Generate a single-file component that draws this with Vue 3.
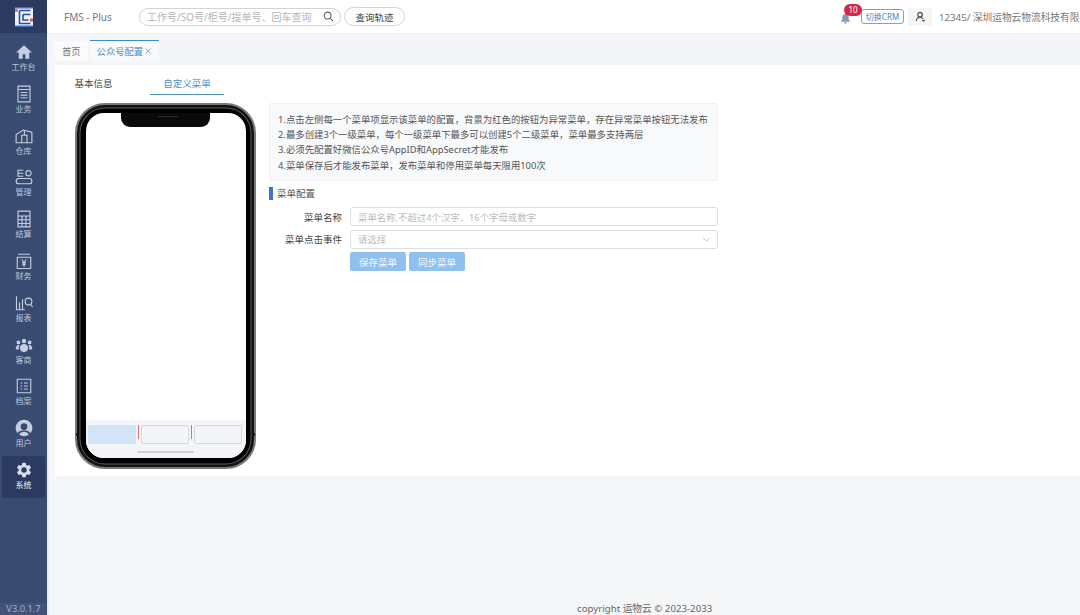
<template>
  <div class="layout">
    <aside class="sidebar">
      <div class="logo">
        <svg width="20" height="20" viewBox="0 0 20 20">
          <rect x="1" y="1" width="18" height="18" fill="#eef2f9" />
          <path d="M1 .8h18M1 19.2h18" stroke="#3c6cc0" stroke-width="1.4" />
          <path d="M5.5 3.5h11M5.5 3.5v13h11M9 7.5h7.5M9 7.5V13h5.5" fill="none" stroke="#2b4f9a" stroke-width="1.6" />
          <rect x="1" y="2" width="3" height="3" fill="#e8795f" />
          <rect x="16" y="11.5" width="3" height="3" fill="#e2574c" />
        </svg>
      </div>
      <nav class="nav">
        <a v-for="item in menu" :key="item.label" class="nav-item" :class="{ active: item.active }">
          <svg class="nav-icon" viewBox="0 0 24 24">
            <path v-if="item.fill" :d="item.fill" fill="currentColor" fill-rule="evenodd" />
            <path v-if="item.stroke" :d="item.stroke" fill="none" stroke="currentColor" stroke-width="1.5" />
          </svg>
          <span>{{ item.label }}</span>
        </a>
      </nav>
      <div class="version">V3.0.1.7</div>
    </aside>

    <div class="main">
      <header class="header">
        <span class="brand">FMS - Plus</span>
        <i class="divider"></i>
        <div class="search">
          <span class="search-text">工作号/SO号/柜号/提单号、回车查询</span>
          <svg width="11" height="11" viewBox="0 0 24 24" fill="none" stroke="#666" stroke-width="2.4">
            <circle cx="10" cy="10" r="7.5" />
            <path d="M16 16l6 6" />
          </svg>
        </div>
        <button class="track-btn">查询轨迹</button>
        <div class="header-right">
          <div class="bell">
            <svg class="bell-icon" width="11" height="12" viewBox="0 0 24 24" fill="#8a97ab">
              <path d="M12 1a2 2 0 0 0-2 2v.6C6.6 4.5 5 7.4 5 11v5l-3 3v1h20v-1l-3-3v-5c0-3.6-1.6-6.5-5-7.4V3a2 2 0 0 0-2-2zM9 21.5a3 3 0 0 0 6 0z" />
            </svg>
            <span class="badge">10</span>
          </div>
          <span class="crm">切换CRM</span>
          <span class="user-box">
            <svg width="11" height="11" viewBox="0 0 24 24" fill="none" stroke="#555" stroke-width="2.6">
              <circle cx="11" cy="8" r="5" />
              <path d="M3 22c0-5 3-8 8-8 3 0 5 1 7 3M16 20l2 2 3-3" />
            </svg>
          </span>
          <span class="company">12345/ 深圳运物云物流科技有限公司</span>
        </div>
      </header>

      <div class="tabs">
        <span class="tab">首页</span>
        <span class="tab current">公众号配置
          <svg width="8" height="8" viewBox="0 0 10 10" stroke="#777" stroke-width="1">
            <path d="M1 1l8 8M9 1l-8 8" />
          </svg>
        </span>
      </div>

      <section class="content">
        <div class="sub-tabs">
          <span class="sub-tab">基本信息</span>
          <span class="sub-tab selected">自定义菜单</span>
        </div>

        <div class="panel">
          <div class="phone">
            <div class="notch"><i class="speaker"></i></div>
            <i class="side-btn left"></i>
            <i class="side-btn right"></i>
            <div class="screen">
              <div class="screen-body"></div>
              <div class="menu-bar">
                <template v-for="(slot, i) in 3" :key="slot">
                  <i v-if="i > 0" class="menu-line"></i>
                  <span class="menu-slot" :class="{ on: i === 0 }"></span>
                </template>
              </div>
              <i class="home-line"></i>
            </div>
          </div>

          <div class="config">
            <div class="tips">
              <p v-for="line in tips" :key="line">{{ line }}</p>
            </div>
            <h3 class="section-title">菜单配置</h3>
            <div class="form-row">
              <label>菜单名称</label>
              <div class="field">菜单名称,不超过4个汉字、16个字母或数字</div>
            </div>
            <div class="form-row">
              <label>菜单点击事件</label>
              <div class="field select">
                <span>请选择</span>
                <svg width="9" height="5" viewBox="0 0 10 6" fill="none" stroke="#b5b5b5">
                  <path d="M1 1l4 4 4-4" />
                </svg>
              </div>
            </div>
            <div class="actions">
              <button class="primary">保存菜单</button>
              <button class="primary">同步菜单</button>
            </div>
          </div>
        </div>
      </section>

      <footer class="footer">copyright 运物云 © 2023-2033</footer>
    </div>
  </div>
</template>

<script setup>
const gear = 'M19.14 12.94c.04-.3.06-.61.06-.94 0-.32-.02-.64-.07-.94l2.03-1.58a.49.49 0 0 0 .12-.61l-1.92-3.32a.49.49 0 0 0-.59-.22l-2.39.96c-.5-.38-1.03-.7-1.62-.94l-.36-2.54a.48.48 0 0 0-.48-.41h-3.84a.48.48 0 0 0-.47.41l-.36 2.54c-.59.24-1.13.57-1.62.94l-2.39-.96a.49.49 0 0 0-.59.22L2.74 8.87a.48.48 0 0 0 .12.61l2.03 1.58c-.05.3-.09.63-.09.94s.02.64.07.94l-2.03 1.58a.49.49 0 0 0-.12.61l1.92 3.32c.12.22.37.29.59.22l2.39-.96c.5.38 1.03.7 1.62.94l.36 2.54c.05.24.24.41.48.41h3.84c.24 0 .44-.17.47-.41l.36-2.54c.59-.24 1.13-.56 1.62-.94l2.39.96c.22.08.47 0 .59-.22l1.92-3.32a.48.48 0 0 0-.12-.61l-2.01-1.58zM12 15.6A3.6 3.6 0 1 1 12 8.4a3.6 3.6 0 0 1 0 7.2z'

const menu = [
  { label: '工作台', fill: 'M12 3 1.5 12.5H5V21h5.2v-6h3.6v6H19v-8.5h3.5z' },
  { label: '业务', stroke: 'M4 1.5h16v21H4zM4 6h16M7.5 10h9M7.5 13.5h9M7.5 17h9' },
  { label: '仓库', stroke: 'M1.5 21V10L11 4l11.5 3v14zM9 21V11h7v10M12.5 4v7' },
  { label: '管理', stroke: 'M11 3H4v4h7M4 7v4h7M18 7m-3.5 0a3.5 3.5 0 1 0 7 0a3.5 3.5 0 1 0-7 0M5 14h14a3.5 3.5 0 0 1 0 7H5a3.5 3.5 0 0 1 0-7z' },
  { label: '结算', stroke: 'M4 1.5h16v21H4zM4 8h16M4 13h16M4 18h16M9.3 8v14.5M14.6 8v14.5' },
  { label: '财务', stroke: 'M3 7h18v15H3zM4 3h16M9 10l3 4 3-4M12 14v5.5M9.5 14.5h5M9.5 17h5' },
  { label: '报表', stroke: 'M2 3v18h11M6 11v10M10 7v14M18 10m-4.5 0a4.5 4.5 0 1 0 9 0a4.5 4.5 0 1 0-9 0M21 14l2.5 3.5' },
  { label: '客商', fill: 'M12 3.5a3 3 0 1 0 0 6 3 3 0 0 0 0-6zM4.5 6a2.5 2.5 0 1 0 0 5 2.5 2.5 0 0 0 0-5zM19.5 6a2.5 2.5 0 1 0 0 5 2.5 2.5 0 0 0 0-5zM12 10.5c-3.5 0-5.5 2.5-5.5 5.5s2.5 5.5 5.5 5.5 5.5-2.5 5.5-5.5-2-5.5-5.500-5.500zM1 17c0-2.5 1.5-5 3.5-5 .6 0 1.1.1 1.5.3-.6 1-1 2.3-1 3.7 0 .8.1 1.5.3 2.2C3.500 18.200 1 18 1 17zM23 17c0-2.5-1.5-5-3.500-5-.6 0-1.100.1-1.500.3.6 1 1 2.300 1 3.700 0 .8-.1 1.500-.3 2.200 1.800 0 4.300-.2 4.300-1.200z' },
  { label: '档案', stroke: 'M3 3h18v18H3zM7.5 8h2M7.5 12h2M7.5 16h2M12 8h5M12 12h5M12 16h5' },
  { label: '用户', fill: 'M12 1a11 11 0 0 0-8.5 18c1.5-3 4.5-4 8.5-4s7 1 8.5 4A11 11 0 0 0 12 1zM12 5.5a4.5 4.5 0 1 1 0 9 4.5 4.5 0 0 1 0-9zM5.5 20.5c1.5-2.2 3.800-3.500 6.500-3.500s5 1.300 6.500 3.500a11 11 0 0 1-13 0z' },
  { label: '系统', fill: gear, active: true }
]

const tips = [
  '1.点击左侧每一个菜单项显示该菜单的配置，背景为红色的按钮为异常菜单，存在异常菜单按钮无法发布',
  '2.最多创建3个一级菜单，每个一级菜单下最多可以创建5个二级菜单，菜单最多支持两层',
  '3.必须先配置好微信公众号AppID和AppSecret才能发布',
  '4.菜单保存后才能发布菜单，发布菜单和停用菜单每天限用100次'
]
</script>

<style>
html,
body {
  margin: 0;
  overflow: hidden;
}
</style>

<style scoped>
.layout {
  display: flex;
  width: 1080px;
  height: 615px;
  overflow: hidden;
  font-family: "Noto Sans", "Noto Sans CJK SC", sans-serif;
  color: #555;
  background: #f4f6f8;
}

.sidebar {
  width: 47px;
  flex: none;
  display: flex;
  flex-direction: column;
  background: #3a4b72;
  box-shadow: 1px 0 2px rgba(80, 110, 190, 0.15);
}

.logo {
  height: 33px;
  display: flex;
  align-items: center;
  justify-content: center;
  background: #2c3a5f;
}

.nav {
  flex: 1;
  padding-top: 5px;
}

.nav-item {
  box-sizing: border-box;
  height: 41.8px;
  margin: 0 2px;
  padding-top: 5px;
  border-radius: 3px;
  display: flex;
  flex-direction: column;
  align-items: center;
  font-size: 8px;
  line-height: 10px;
  color: #bfc9dd;
}

.nav-icon {
  width: 18px;
  height: 18px;
  margin-bottom: 1px;
  color: #c5cfe2;
}

.nav-item.active {
  background: #2b3a5e;
  color: #f0f3f8;
}

.nav-item.active .nav-icon {
  color: #d5deef;
}

.version {
  height: 12px;
  line-height: 12px;
  text-align: center;
  font-size: 9.3px;
  color: #a0adc5;
  background: #42527a;
}

.main {
  flex: 1;
  min-width: 0;
  display: flex;
  flex-direction: column;
}

.header {
  height: 34px;
  flex: none;
  display: flex;
  align-items: center;
  padding-left: 17px;
  background: #fff;
  border-bottom: 1px solid #eef0f3;
  box-sizing: border-box;
}

.brand {
  width: 48px;
  flex: none;
  font-size: 10px;
  white-space: nowrap;
  color: #777;
}

.divider {
  width: 1px;
  height: 15px;
  margin: 0 12px 0 14px;
  background: #e4e4e4;
}

.search {
  box-sizing: border-box;
  width: 202px;
  height: 18px;
  margin-left: 1px;
  flex: none;
  display: flex;
  align-items: center;
  justify-content: space-between;
  padding: 0 6px 0 7px;
  border: 1px solid #d3d3d3;
  border-radius: 9px;
}

.search-text {
  font-size: 10px;
  white-space: nowrap;
  color: #b5b5b5;
}

.track-btn {
  box-sizing: border-box;
  width: 61px;
  height: 19px;
  margin-left: 3px;
  flex: none;
  padding: 0;
  font-family: inherit;
  font-size: 9.5px;
  color: #444;
  background: #fff;
  border: 1px solid #d3d3d3;
  border-radius: 10px;
}

.header-right {
  display: flex;
  flex: none;
  align-items: center;
  margin-left: 435px;
}

.bell {
  position: relative;
  width: 21px;
  height: 12px;
  margin-top: 3px;
}

.bell-icon {
  display: block;
}

.badge {
  position: absolute;
  left: 4px;
  top: -8px;
  width: 18px;
  height: 12px;
  border-radius: 6px;
  background: #d3274a;
  color: #fff;
  font-size: 8px;
  line-height: 12px;
  text-align: center;
}

.crm {
  box-sizing: border-box;
  width: 43px;
  height: 15px;
  line-height: 13px;
  text-align: center;
  font-size: 8px;
  white-space: nowrap;
  color: #3d8bc9;
  border: 1px solid #6fa8d6;
  border-radius: 3px;
}

.user-box {
  width: 24px;
  height: 18px;
  margin-left: 4px;
  display: flex;
  align-items: center;
  justify-content: center;
  background: #f6f6f6;
}

.company {
  margin-left: 7px;
  font-size: 9.7px;
  white-space: nowrap;
  color: #777;
}

.tabs {
  height: 31px;
  flex: none;
  display: flex;
  align-items: flex-end;
  gap: 2px;
  padding-left: 8px;
  box-sizing: border-box;
  background: #f3f5f8;
}

.tab {
  height: 20px;
  margin-bottom: 4px;
  padding: 0 7px;
  display: flex;
  align-items: center;
  gap: 2px;
  font-size: 9.3px;
  color: #777;
  background: #fbfbfc;
}

.tab.current {
  box-sizing: border-box;
  width: 69px;
  height: 21px;
  color: #4a90c8;
  background: #f7f9fb;
  border-top: 1px solid #3d8bc9;
  white-space: nowrap;
}

.content {
  box-sizing: border-box;
  height: 411px;
  flex: none;
  margin-left: 8px;
  background: #fff;
}

.sub-tabs {
  display: flex;
  height: 30px;
}

.sub-tab {
  box-sizing: border-box;
  width: 76px;
  height: 30px;
  padding-top: 12px;
  text-align: center;
  font-size: 9.5px;
  line-height: 13px;
  color: #444;
}

.sub-tab:first-child {
  margin-left: 1px;
  width: 75px;
}

.sub-tab.selected {
  width: 74px;
  margin-left: 19px;
  color: #4a90c8;
  border-bottom: 1.5px solid #4a8fc4;
}

.panel {
  display: flex;
  align-items: flex-start;
  gap: 13px;
  padding: 8px 0 0 20px;
}

.phone {
  position: relative;
  box-sizing: border-box;
  width: 181px;
  height: 366px;
  flex: none;
  padding: 8px 8px 9px 9px;
  border: 2px solid #77797c;
  border-radius: 30px;
  background: #000;
  box-shadow: inset 0 0 0 2.5px #111, inset 0 0 0 3.5px #5c5c5c;
}

.notch {
  position: absolute;
  z-index: 1;
  left: 44px;
  top: 8px;
  width: 89px;
  height: 14px;
  border-radius: 0 0 9px 9px;
  background: #0a0a0a;
}

.speaker {
  position: absolute;
  left: 50%;
  top: 3px;
  width: 20px;
  height: 1px;
  margin-left: -8px;
  background: #2a2a2a;
}

.side-btn {
  position: absolute;
  top: 328px;
  width: 1px;
  height: 3px;
  background: #222;
}

.side-btn.left {
  left: -1px;
}

.side-btn.right {
  right: -1px;
}

.screen {
  position: relative;
  height: 100%;
  overflow: hidden;
  border-radius: 18px;
  background: #fff;
}

.screen-body {
  height: 307px;
}

.menu-bar {
  height: 38px;
  display: flex;
  align-items: flex-start;
  padding: 5px 3px 0 2px;
  box-sizing: border-box;
  background: #f3f5f9;
}

.menu-slot {
  box-sizing: border-box;
  width: 48px;
  height: 19px;
  flex: none;
  border: 1px solid #d5d8dc;
  border-radius: 2px;
}

.menu-slot.on {
  background: #d3e3f8;
  border-color: #d3e3f8;
}

.menu-line {
  width: 1px;
  height: 14px;
  margin: 0 2px;
  background: #d8706f;
}

.home-line {
  position: absolute;
  left: 51px;
  bottom: 5px;
  width: 57px;
  height: 2px;
  border-radius: 1px;
  background: #cfd0d2;
}

.config {
  width: 449px;
  flex: none;
}

.tips {
  box-sizing: border-box;
  height: 78px;
  padding: 8px 8px 0;
  background: #f8f9fb;
  border: 1px solid #f0f1f3;
  border-radius: 2px;
}

.tips p {
  margin: 0;
  font-size: 9.4px;
  line-height: 15.2px;
  white-space: nowrap;
  color: #555;
}

.section-title {
  height: 13px;
  margin: 6px 0 7px;
  padding-left: 4px;
  font-size: 9.5px;
  font-weight: 400;
  line-height: 13px;
  color: #555;
  border-left: 4px solid #3b72d9;
}

.form-row {
  display: flex;
  align-items: center;
  height: 19px;
  margin-bottom: 3.5px;
}

.form-row label {
  width: 73px;
  flex: none;
  text-align: right;
  font-size: 9.5px;
  color: #444;
}

.field {
  box-sizing: border-box;
  width: 368px;
  height: 19px;
  margin-left: 8px;
  padding: 0 7px;
  display: flex;
  align-items: center;
  font-size: 9.4px;
  white-space: nowrap;
  color: #bbb;
  border: 1px solid #dcdfe4;
  border-radius: 3px;
}

.field.select {
  justify-content: space-between;
  padding-right: 6px;
}

.actions {
  display: flex;
  gap: 3px;
  padding-left: 81px;
}

.primary {
  width: 56px;
  height: 19px;
  padding: 0;
  border: none;
  border-radius: 2px;
  font-family: inherit;
  font-size: 9.5px;
  color: #f3f8fd;
  background: #90c0ee;
}

.footer {
  margin-top: auto;
  padding-left: 530px;
  font-size: 9.7px;
  line-height: 12px;
  white-space: nowrap;
  color: #666;
}
</style>
